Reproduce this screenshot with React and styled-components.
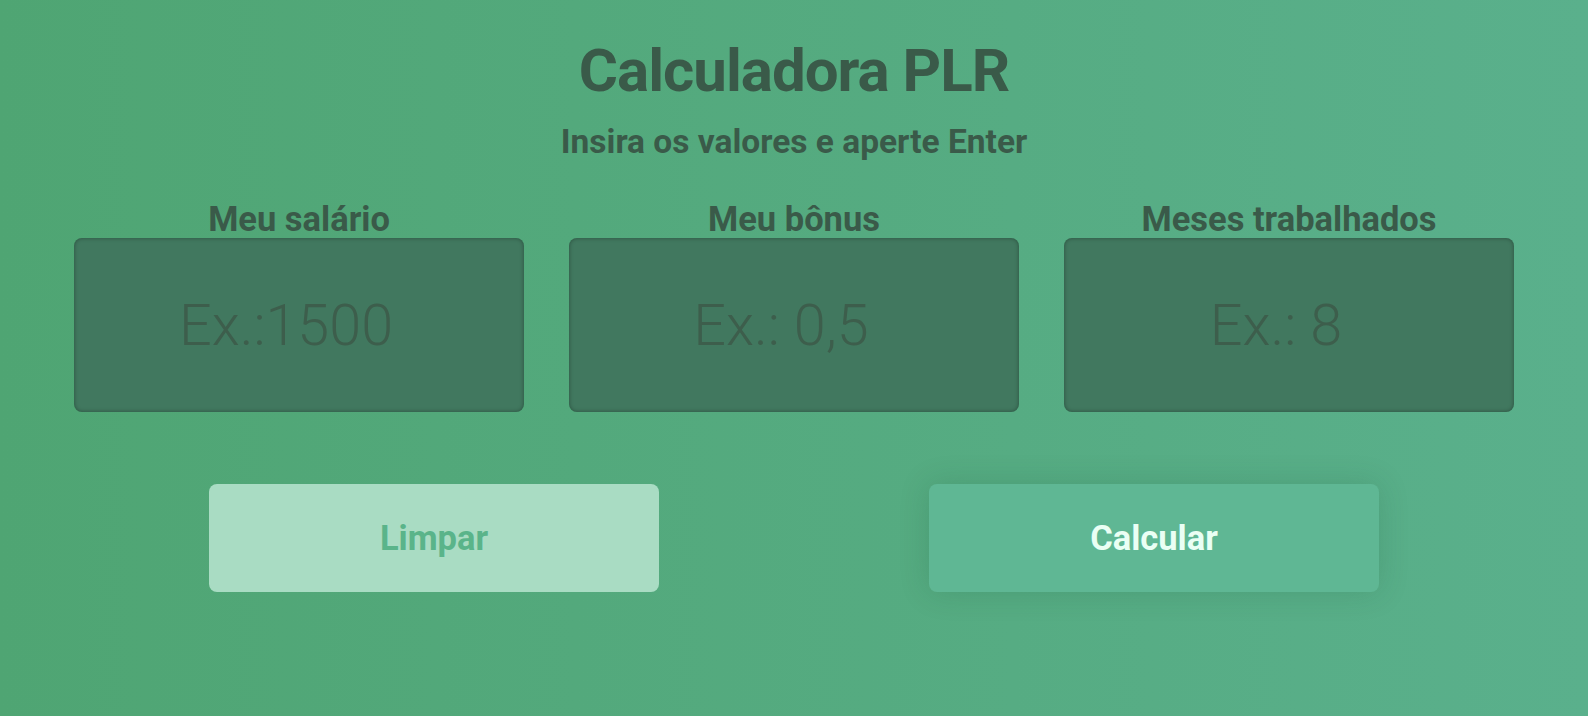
import React from "react";
import styled, { createGlobalStyle } from "styled-components";

const Global = createGlobalStyle`
  html, body { margin: 0; padding: 0; }
  body { font-family: Roboto, "Noto Sans", sans-serif; }
  * { box-sizing: border-box; }
`;

const Page = styled.main`
  min-height: 100vh;
  background: linear-gradient(to right, #4fa573, #5ab08c);
  padding-top: 40px;
  display: flex;
  flex-direction: column;
  align-items: center;
  color: #3a5a49;
`;

const Title = styled.h1`
  margin: 0;
  font-size: 60px;
  line-height: 62px;
  font-weight: 700;
  letter-spacing: -1px;
  color: #3a5a49;
`;

const Subtitle = styled.h2`
  margin: 24px 0 0;
  font-size: 33.5px;
  line-height: 32px;
  font-weight: 700;
  color: #3a5a49;
`;

const Fields = styled.div`
  margin-top: 45px;
  width: 1440px;
  display: grid;
  grid-template-columns: repeat(3, 450px);
  justify-content: space-between;
`;

const Field = styled.label`
  display: flex;
  flex-direction: column;
  align-items: center;
  gap: 3px;
`;

const LabelText = styled.span`
  font-size: 34.5px;
  line-height: 32px;
  font-weight: 700;
  color: #3a5a49;
`;

const Input = styled.input`
  width: 450px;
  height: 174px;
  border: none;
  outline: none;
  border-radius: 8px;
  padding: 0 26px 0 0;
  background: #41785f;
  box-shadow: inset 0 0 4px rgba(0, 0, 0, 0.35);
  text-align: center;
  font-family: Roboto, sans-serif;
  font-weight: 300;
  font-size: 57.5px;
  color: #3d5e4c;
  &::placeholder { color: #3d5e4c; opacity: 1; }
`;

const Actions = styled.div`
  margin-top: 72px;
  width: 1440px;
  display: flex;
  justify-content: space-around;
`;

const Button = styled.button`
  width: 450px;
  height: 108px;
  border: none;
  border-radius: 8px;
  font-family: Roboto, sans-serif;
  font-weight: 700;
  font-size: 34.5px;
  cursor: pointer;
  background: ${(p) => (p.$primary ? "#5fb794" : "#a9dcc3")};
  color: ${(p) => (p.$primary ? "#eafff4" : "#5ab48a")};
  box-shadow: ${(p) => (p.$primary ? "0 0 30px rgba(20, 80, 50, 0.18)" : "none")};
`;

export default function App() {
  return (
    <>
      <Global />
      <Page>
        <Title>Calculadora PLR</Title>
        <Subtitle>Insira os valores e aperte Enter</Subtitle>
        <Fields>
          <Field>
            <LabelText>Meu salário</LabelText>
            <Input placeholder="Ex.:1500" />
          </Field>
          <Field>
            <LabelText>Meu bônus</LabelText>
            <Input placeholder="Ex.: 0,5" />
          </Field>
          <Field>
            <LabelText>Meses trabalhados</LabelText>
            <Input placeholder="Ex.: 8" />
          </Field>
        </Fields>
        <Actions>
          <Button>Limpar</Button>
          <Button $primary>Calcular</Button>
        </Actions>
      </Page>
    </>
  );
}
